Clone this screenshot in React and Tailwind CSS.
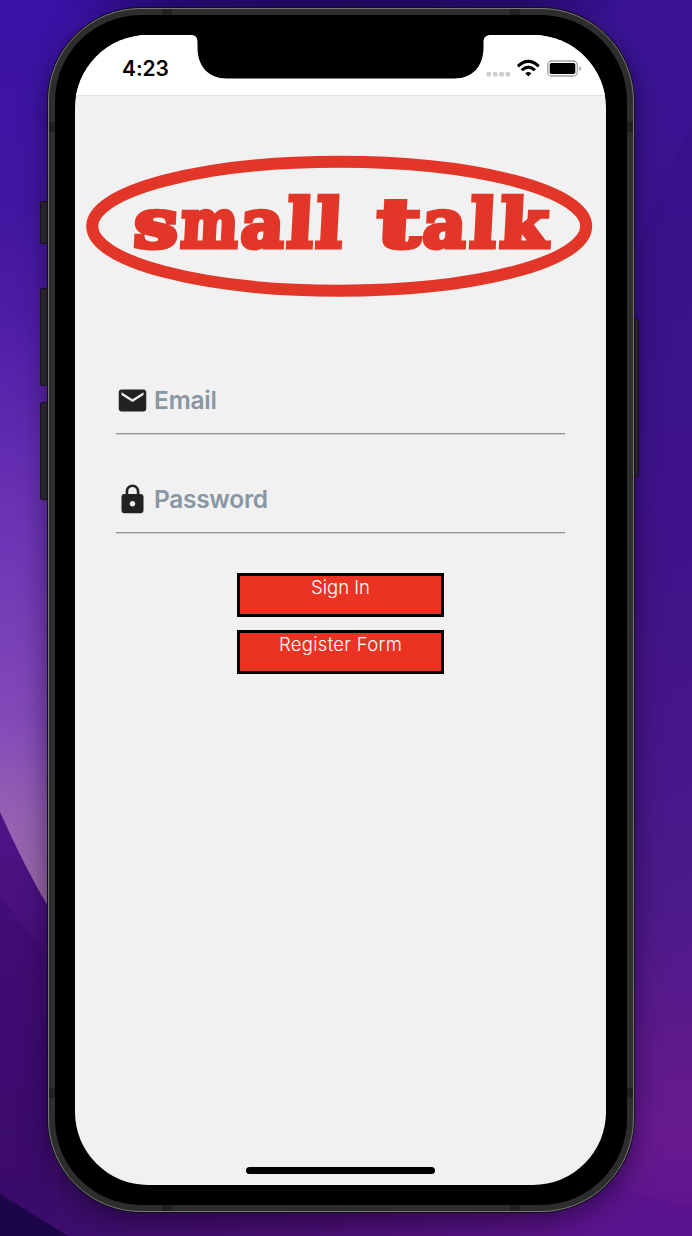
import { MdEmail, MdLock } from "react-icons/md";

function Wallpaper() {
  return (
    <svg className="absolute inset-0 h-full w-full" viewBox="0 0 692 1236" aria-hidden="true">
      <defs>
        <linearGradient id="left" x1="0" y1="0" x2="0" y2="1">
          <stop offset="0" stopColor="#3912a6" />
          <stop offset="0.17" stopColor="#4216a0" />
          <stop offset="0.26" stopColor="#4e1da6" />
          <stop offset="0.41" stopColor="#6a32b4" />
          <stop offset="0.58" stopColor="#8249b8" />
          <stop offset="0.66" stopColor="#9460b2" />
          <stop offset="0.74" stopColor="#9b6ca6" />
        </linearGradient>
        <linearGradient id="right" x1="0" y1="0" x2="0" y2="1">
          <stop offset="0" stopColor="#3b1496" />
          <stop offset="0.15" stopColor="#3a1390" />
          <stop offset="0.45" stopColor="#43148c" />
          <stop offset="0.73" stopColor="#4c1a8a" />
          <stop offset="0.84" stopColor="#5d1a8c" />
          <stop offset="0.92" stopColor="#681a90" />
          <stop offset="1" stopColor="#5a138c" />
        </linearGradient>
        <linearGradient id="lower" x1="0" y1="0" x2="0" y2="1">
          <stop offset="0" stopColor="#4e1487" />
          <stop offset="0.4" stopColor="#460f78" />
          <stop offset="1" stopColor="#3c0d6c" />
        </linearGradient>
        <radialGradient id="top" cx="350" cy="0" r="1" gradientUnits="userSpaceOnUse" gradientTransform="translate(350 0) scale(300 50) translate(-350 0)">
          <stop offset="0" stopColor="#22085f" />
          <stop offset="0.6" stopColor="#240969" stopOpacity="0.8" />
          <stop offset="1" stopColor="#2d0d86" stopOpacity="0" />
        </radialGradient>
        <linearGradient id="bottom" x1="0" y1="0" x2="1" y2="0">
          <stop offset="0" stopColor="#3c0d6c" />
          <stop offset="0.5" stopColor="#4c1076" />
          <stop offset="1" stopColor="#5e158e" />
        </linearGradient>
        <linearGradient id="shade" x1="0" y1="0" x2="0" y2="1">
          <stop offset="0" stopColor="#310e7c" stopOpacity="0.35" />
          <stop offset="1" stopColor="#310e7c" stopOpacity="0" />
        </linearGradient>
      </defs>
      <rect width="346" height="1236" fill="url(#left)" />
      <rect x="346" width="346" height="1236" fill="url(#right)" />
      <ellipse cx="350" cy="0" rx="300" ry="50" fill="url(#top)" />
      <path d="M0 812Q24 866 50 910L346 1236H0Z" fill="url(#lower)" />
      <path d="M0 897L50 958V1236H0Z" fill="#360866" opacity="0.3" />
      <path d="M692 125C665 165 653 220 634 255V900H692Z" fill="url(#shade)" />
      <path d="M60 1180H620V1236H60Z" fill="url(#bottom)" />
      <path d="M614 1186Q650 1200 692 1206V1236H560V1190Z" fill="#5c148e" />
      <path d="M0 1194L68 1236H0Z" fill="#1c0649" />
    </svg>
  );
}

function Notch() {
  return (
    <svg className="absolute left-[116px] top-0" width="300" height="44" viewBox="0 0 300 44" aria-hidden="true">
      <path
        d="M0 -1V0C4.500 0 6.500 2.500 6.500 7V12C6.500 31 17 43.500 36 43.500H263C282 43.500 292.500 31 292.500 12V7C292.500 2.500 295 0 300 0V-1Z"
        fill="#000"
      />
    </svg>
  );
}

function StatusIcons() {
  return (
    <svg width="98" height="20" viewBox="0 0 98 20" aria-hidden="true">
      <g fill="#cdcdcd">
        <rect x="1.500" y="13" width="4.500" height="4.500" rx="1.300" />
        <rect x="8" y="13" width="4.500" height="4.500" rx="1.300" />
        <rect x="14.300" y="13" width="4.500" height="4.500" rx="1.300" />
        <rect x="20.600" y="13" width="4.500" height="4.500" rx="1.300" />
      </g>
      <g fill="none" stroke="#000" strokeWidth="3.100">
        <path d="M32.900 7.300Q43.300 -2.500 53.700 7.300" />
        <path d="M36.700 11.200Q43.300 4.900 49.900 11.200" />
      </g>
      <path d="M40.200 14.300Q43.300 11.500 46.400 14.300L43.300 17.600Z" fill="#000" />
      <rect x="62.700" y="2" width="29.600" height="15" rx="4" fill="none" stroke="#a3a3a3" strokeWidth="1.300" />
      <rect x="64.700" y="4" width="25.600" height="11" rx="1.800" fill="#000" />
      <path d="M94.300 7V12Q96.200 11 96.200 9.500Q96.200 8 94.300 7Z" fill="#a3a3a3" />
    </svg>
  );
}

function Logo() {
  return (
    <svg width="531" height="150" viewBox="75 152 531 150" role="img" aria-label="small talk">
      <ellipse cx="339.200" cy="226.200" rx="247" ry="64.500" fill="none" stroke="#e23628" strokeWidth="12" />
      <g
        transform="translate(12 0) skewX(-3)"
        fill="#e23628"
        stroke="#e23628"
        strokeWidth="5"
        fontFamily="'DejaVu Serif', serif"
        fontWeight="700"
        fontSize="67"
      >
        <text y="247">
          <tspan x="134" textLength="44" lengthAdjust="spacingAndGlyphs">s</tspan>
          <tspan x="181" textLength="57" lengthAdjust="spacingAndGlyphs">m</tspan>
          <tspan x="241" textLength="43" lengthAdjust="spacingAndGlyphs">a</tspan>
          <tspan x="287" textLength="26" lengthAdjust="spacingAndGlyphs">l</tspan>
          <tspan x="316" textLength="26" lengthAdjust="spacingAndGlyphs">l</tspan>
        </text>
        <text y="247">
          <tspan x="377" textLength="43" lengthAdjust="spacingAndGlyphs">t</tspan>
          <tspan x="423" textLength="43" lengthAdjust="spacingAndGlyphs">a</tspan>
          <tspan x="470" textLength="26" lengthAdjust="spacingAndGlyphs">l</tspan>
          <tspan x="500" textLength="48" lengthAdjust="spacingAndGlyphs">k</tspan>
        </text>
      </g>
    </svg>
  );
}

function Field({ icon: Icon, label, tracking, type }) {
  return (
    <label className="flex h-[50px] items-start border-b border-[#8b949e] shadow-[0_1px_0_#cfd2d5]">
      <Icon className="-ml-[0.5px] -mt-[0.5px] size-[33px] shrink-0 text-[#222]" />
      <input
        type={type}
        placeholder={label}
        className={`ml-[5.500px] h-[33px] w-full bg-transparent text-[24.500px] font-semibold outline-none placeholder:text-[#8a96a3] placeholder:opacity-100 ${tracking}`}
      />
    </label>
  );
}

function ActionButton({ children, tracking }) {
  return (
    <button
      className={`flex h-[44px] w-[207px] items-start justify-center border-[3px] border-black bg-[#eb3324] text-[18.500px] font-light leading-[22px] text-white ${tracking}`}
    >
      {children}
    </button>
  );
}

const sideKey = "absolute rounded-[2px] border border-[#19161d] bg-[#2e2e2e]";
const band = "absolute bg-[#202020]";

export default function App() {
  return (
    <div className="relative flex h-[1236px] w-[692px] overflow-hidden bg-[#3c128f] pl-12 pt-2 font-['Inter',sans-serif]">
      <Wallpaper />
      <div className="relative h-[1204px] w-[586px]">
        <div className={`${sideKey} -left-2 top-[193px] h-[43px] w-3`} />
        <div className={`${sideKey} -left-2 top-[280px] h-[98px] w-3`} />
        <div className={`${sideKey} -left-2 top-[394px] h-[98px] w-3`} />
        <div className={`${sideKey} -right-[5px] top-[311px] h-[158px] w-3`} />
        <div className="relative h-full rounded-[93px] border border-[#797979] bg-[#2d2d2d] p-[6px] shadow-[0_0_0_1px_#130c20,0_8px_26px_2px_rgba(15,0,30,0.5)]">
          <div className={`${band} left-0 top-[113px] h-[10px] w-[6px]`} />
          <div className={`${band} right-0 top-[113px] h-[10px] w-[6px]`} />
          <div className={`${band} bottom-[113px] left-0 h-[10px] w-[6px]`} />
          <div className={`${band} bottom-[113px] right-0 h-[10px] w-[6px]`} />
          <div className={`${band} left-[113px] top-0 h-[6px] w-[10px]`} />
          <div className={`${band} right-[113px] top-0 h-[6px] w-[10px]`} />
          <div className={`${band} bottom-0 left-[113px] h-[6px] w-[10px]`} />
          <div className={`${band} bottom-0 right-[113px] h-[6px] w-[10px]`} />
          <div className="relative h-full rounded-[86px] bg-black px-5 pb-5 pt-5">
            <main className="relative flex h-[1150px] w-[531px] flex-col overflow-hidden rounded-[73px] bg-[#f1f1f1]">
              <Notch />
              <header className="flex h-[61px] shrink-0 items-start justify-between border-b border-[#e2e2e2] bg-white pl-[47px] pr-[23px] pt-6">
                <span className="text-[21px] font-semibold leading-5 tracking-[-0.1px]">4:23</span>
                <StatusIcons />
              </header>
              <div className="mt-14 h-[150px] shrink-0">
                <Logo />
              </div>
              <form className="flex flex-col px-[41px] pt-[82px]" onSubmit={(e) => e.preventDefault()}>
                <div className="flex flex-col gap-[49px]">
                  <Field icon={MdEmail} label="Email" type="email" tracking="tracking-[-0.2px]" />
                  <Field icon={MdLock} label="Password" type="password" tracking="tracking-[-0.3px]" />
                </div>
                <div className="mt-[40px] flex flex-col items-center gap-[13px]">
                  <ActionButton tracking="tracking-normal">Sign In</ActionButton>
                  <ActionButton tracking="tracking-[0.3px]">Register Form</ActionButton>
                </div>
              </form>
              <div className="mb-[11px] mt-auto h-[7px] w-[189px] self-center rounded-full bg-black" />
            </main>
          </div>
        </div>
      </div>
    </div>
  );
}
